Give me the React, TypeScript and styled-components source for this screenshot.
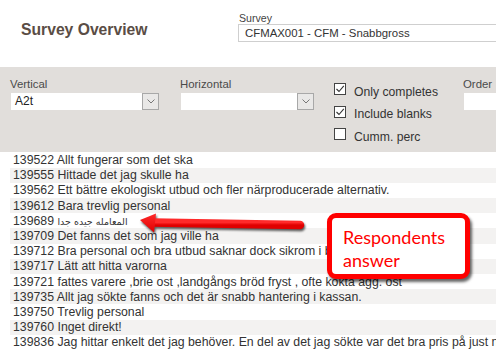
import React from "react";
import styled, { createGlobalStyle } from "styled-components";

const GlobalStyle = createGlobalStyle`
  body {
    margin: 0;
    background: #ffffff;
    font-family: "Liberation Sans", Arial, sans-serif;
  }
`;

const Page = styled.div`
  position: relative;
  width: 496px;
  height: 351px;
  overflow: hidden;
  background: #fff;
`;

const Header = styled.header`
  display: flex;
  height: 67px;
`;

const Title = styled.h1`
  margin: 0;
  width: 238px;
  padding: 21px 0 0 21px;
  box-sizing: border-box;
  font-size: 15.7px;
  line-height: 18px;
  font-weight: 700;
  color: #5a4d45;
`;

const SurveyField = styled.div`
  flex: 1;
  padding-top: 12px;
  min-width: 0;
`;

const SmallLabel = styled.div`
  font-size: 10.6px;
  line-height: 12px;
  color: #444;
  padding-left: 1px;
`;

const SurveyBox = styled.div`
  height: 18px;
  box-sizing: border-box;
  border: 1px solid #cfcfcf;
  border-right: none;
  padding-left: 6px;
  font-size: 11.4px;
  line-height: 16px;
  color: #333;
`;

const Filters = styled.section`
  display: flex;
  height: 85px;
  box-sizing: border-box;
  padding: 10px 0 0 10px;
  background: #e1dedb;
  overflow: hidden;
`;

const Field = styled.div<{ $width: number; $gap?: number }>`
  flex: none;
  width: ${(p) => p.$width}px;
  margin-right: ${(p) => p.$gap ?? 0}px;
`;

const FieldLabel = styled.div`
  font-size: 11.4px;
  line-height: 14px;
  color: #4a4a4a;
  margin-bottom: 2px;
`;

const Select = styled.div`
  display: flex;
  height: 17px;
  margin-left: 1px;
`;

const SelectValue = styled.div`
  flex: 1;
  background: #fff;
  font-size: 12px;
  line-height: 17px;
  padding-left: 4px;
  color: #222;
`;

const SelectButton = styled.div`
  width: 17px;
  box-sizing: border-box;
  border: 1px solid #a8a8a8;
  background: #e9e8e7;
  display: flex;
  align-items: center;
  justify-content: center;
`;

const Checks = styled.div`
  padding-top: 6px;
  display: flex;
  flex-direction: column;
`;

const CheckRow = styled.div`
  display: flex;
  height: 22.7px;
`;

const Box = styled.span`
  width: 12px;
  height: 12px;
  box-sizing: border-box;
  border: 1px solid #444;
  background: #fff;
  display: flex;
  align-items: center;
  justify-content: center;
  margin-right: 8px;
`;

const CheckText = styled.span`
  font-size: 12.2px;
  line-height: 14px;
  padding-top: 1.5px;
  color: #333;
`;

const OrderInput = styled.div`
  height: 17px;
  background: #fff;
  margin-left: 1px;
`;

const List = styled.ul`
  list-style: none;
  margin: 0;
  padding: 0.5px 0 0 10px;
`;

const Row = styled.li<{ $shade: boolean }>`
  height: 15.2px;
  box-sizing: border-box;
  padding: 1.5px 0 0 3px;
  font-size: 12.3px;
  line-height: 13.7px;
  color: #333;
  white-space: nowrap;
  overflow: hidden;
  background: ${(p) => (p.$shade ? "#f3f2f1" : "#fff")};
`;

const Arabic = styled.span`
  font-family: "DejaVu Sans", "Noto Sans", sans-serif;
  font-size: 9.5px;
`;

const Arrow = styled.svg`
  position: absolute;
  left: 130px;
  top: 205px;
  filter: drop-shadow(1.5px 2px 1px rgba(0, 0, 0, 0.65));
`;

const Callout = styled.div`
  position: absolute;
  left: 327px;
  top: 213px;
  width: 143px;
  height: 66px;
  box-sizing: border-box;
  border: 5px solid #ff0000;
  border-radius: 9px;
  background: #fff;
  box-shadow: 2px 3px 3px rgba(0, 0, 0, 0.6);
  padding: 7.5px 0 0 11px;
  font-family: Lato, "Open Sans", sans-serif;
  font-size: 18px;
  line-height: 23.5px;
  color: #ff0000;
`;

const Chevron = () => (
  <svg width="8" height="5" viewBox="0 0 8 5">
    <path d="M0.5 0.5 L4 4 L7.5 0.5" fill="none" stroke="#777" strokeWidth="1" />
  </svg>
);

const Tick = () => (
  <svg width="10" height="10" viewBox="0 0 10 10">
    <path d="M1.5 5 L4 7.5 L8.8 1.8" fill="none" stroke="#333" strokeWidth="1.1" />
  </svg>
);

const answers: [string, React.ReactNode][] = [
  ["139522", "Allt fungerar som det ska"],
  ["139555", "Hittade det jag skulle ha"],
  ["139562", "Ett bättre ekologiskt utbud och fler närproducerade alternativ."],
  ["139612", "Bara trevlig personal"],
  ["139689", <Arabic dir="rtl">المعامله جيده جدا</Arabic>],
  ["139709", "Det fanns det som jag ville ha"],
  ["139712", "Bra personal och bra utbud saknar dock sikrom i butiken"],
  ["139717", "Lätt att hitta varorna"],
  ["139721", "fattes varere ,brie ost ,landgångs bröd fryst , ofte kokta ägg. ost"],
  ["139735", "Allt jag sökte fanns och det är snabb hantering i kassan."],
  ["139750", "Trevlig personal"],
  ["139760", "Inget direkt!"],
  ["139836", "Jag hittar enkelt det jag behöver. En del av det jag sökte var det bra pris på just nu"],
];

export default function App() {
  return (
    <Page>
      <GlobalStyle />
      <Header>
        <Title>Survey Overview</Title>
        <SurveyField>
          <SmallLabel>Survey</SmallLabel>
          <SurveyBox>CFMAX001 - CFM - Snabbgross</SurveyBox>
        </SurveyField>
      </Header>

      <Filters>
        <Field $width={149} $gap={21}>
          <FieldLabel>Vertical</FieldLabel>
          <Select>
            <SelectValue>A2t</SelectValue>
            <SelectButton>
              <Chevron />
            </SelectButton>
          </Select>
        </Field>
        <Field $width={134} $gap={20}>
          <FieldLabel>Horizontal</FieldLabel>
          <Select>
            <SelectValue />
            <SelectButton>
              <Chevron />
            </SelectButton>
          </Select>
        </Field>
        <Field $width={129}>
          <Checks>
            <CheckRow>
              <Box>
                <Tick />
              </Box>
              <CheckText>Only completes</CheckText>
            </CheckRow>
            <CheckRow>
              <Box>
                <Tick />
              </Box>
              <CheckText>Include blanks</CheckText>
            </CheckRow>
            <CheckRow>
              <Box />
              <CheckText>Cumm. perc</CheckText>
            </CheckRow>
          </Checks>
        </Field>
        <Field $width={60}>
          <FieldLabel>Order</FieldLabel>
          <OrderInput />
        </Field>
      </Filters>

      <List>
        {answers.map(([id, text], i) => (
          <Row key={id} $shade={i % 2 === 1}>
            {id} {text}
          </Row>
        ))}
      </List>

      <Arrow width="185" height="40" viewBox="0 0 185 40">
        <defs>
          <linearGradient id="arrowRed" x1="0" y1="0" x2="0" y2="1">
            <stop offset="0" stopColor="#ff2a2a" />
            <stop offset="1" stopColor="#e00000" />
          </linearGradient>
        </defs>
        <path d="M22 17.5 L170 20" stroke="url(#arrowRed)" strokeWidth="8.5" strokeLinecap="round" />
        <path d="M10 15 L26 8.5 L24 27.5 Z" fill="url(#arrowRed)" />
      </Arrow>

      <Callout>
        Respondents
        <br />
        answer
      </Callout>
    </Page>
  );
}
